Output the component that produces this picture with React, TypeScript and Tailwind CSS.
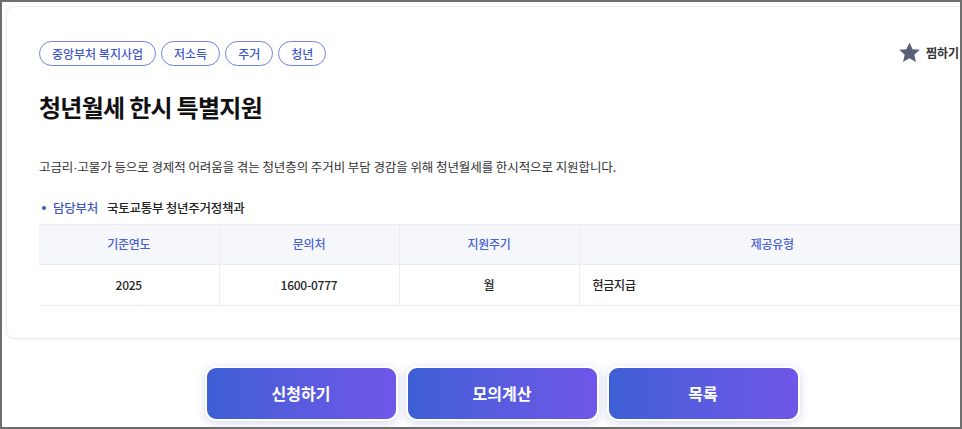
const tags = ['중앙부처 복지사업', '저소득', '주거', '청년'];

const headers = ['기준연도', '문의처', '지원주기', '제공유형'];

const actions = ['신청하기', '모의계산', '목록'];

export default function App() {
  return (
    <div
      className="w-[962px] h-[429px] overflow-hidden border-2 border-[#6e6e6e] bg-white"
      style={{ fontFamily: '"Noto Sans CJK KR", "Noto Sans", sans-serif' }}
    >
      <div className="w-[1000px] px-[4px] pt-[4px]">
        <section className="rounded-lg border border-[#ebebeb] bg-white px-[32px] pt-[34px] pb-[32px] shadow-[0_1px_3px_rgba(0,0,0,0.04)]">
          <div className="flex items-start justify-between">
            <ul className="flex gap-[5px]">
              {tags.map((t) => (
                <li
                  key={t}
                  className="flex h-[25px] items-center rounded-full border border-[#6f84e0] px-[12px] text-[12px] font-medium text-[#3f58c7]"
                >
                  {t}
                </li>
              ))}
            </ul>
            <button className="mr-[6px] flex items-center gap-[5px] text-[12px] font-bold text-[#333]">
              <svg width="23" height="23" viewBox="0 0 24 24" fill="#5b6079">
                <path d="M12 1.5l3.2 7 7.6.7-5.8 5.1 1.8 7.5L12 17.9l-6.8 3.9 1.8-7.5-5.8-5.1 7.6-.7z" />
              </svg>
              찜하기
            </button>
          </div>

          <h1 className="mt-[24px] text-[24px] font-bold leading-[34px] tracking-[-0.03em] text-[#111]">
            청년월세 한시 특별지원
          </h1>

          <p className="mt-[33px] text-[12.5px] leading-[20px] tracking-[-0.006em] text-[#333]">
            고금리<span className="font-['Liberation_Sans',sans-serif]">·</span>고물가 등으로 경제적 어려움을 겪는 청년층의 주거비 부담 경감을 위해 청년월세를 한시적으로 지원합니다.
          </p>

          <div className="mt-[21px] flex items-center text-[12.5px] tracking-[-0.02em]">
            <span className="ml-[3px] mr-[7px] h-[4px] w-[4px] rounded-full bg-[#3f58c7]" />
            <span className="font-medium text-[#3f58c7]">담당부처</span>
            <span className="ml-[9px] font-medium text-[#222]">국토교통부 청년주거정책과</span>
          </div>

          <table className="mt-[6px] w-full border-collapse text-[12px] tracking-[-0.02em]">
            <thead>
              <tr className="h-[40px] border-y border-[#ececf2] bg-[#f6f7fb]">
                {headers.map((h, i) => (
                  <th
                    key={h}
                    className={`font-medium text-[#4a62d2] ${i < 3 ? 'w-[180px] border-r border-[#ececf2]' : ''}`}
                  >
                    {h}
                  </th>
                ))}
              </tr>
            </thead>
            <tbody>
              <tr className="h-[41px] border-b border-[#ececf2] font-medium text-[#222]">
                <td className="border-r border-[#ececf2] text-center">2025</td>
                <td className="border-r border-[#ececf2] text-center">1600-0777</td>
                <td className="border-r border-[#ececf2] text-center">월</td>
                <td className="pl-[13px] text-left">현금지급</td>
              </tr>
            </tbody>
          </table>
        </section>

        <div className="mt-[27px] flex justify-center gap-[8px]">
          {actions.map((a) => (
            <button
              key={a}
              className="flex h-[55px] w-[193px] items-center justify-center rounded-[11px] border-2 border-white bg-gradient-to-r from-[#3d5fd6] to-[#6f56e8] text-[16px] font-bold text-white shadow-[0_2px_8px_rgba(80,90,180,0.25)]"
            >
              {a}
            </button>
          ))}
        </div>
      </div>
    </div>
  );
}
